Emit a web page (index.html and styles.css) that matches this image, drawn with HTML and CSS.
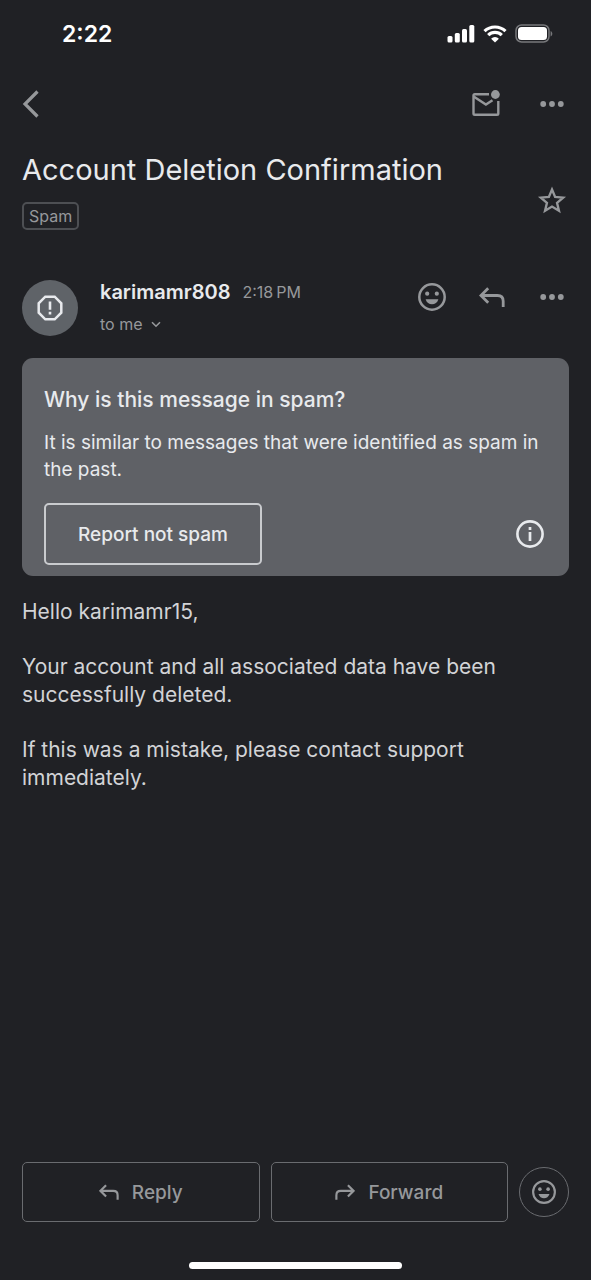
FILE: index.html
```html
<!DOCTYPE html>
<html lang="en">
<head>
<meta charset="utf-8">
<meta name="viewport" content="width=device-width, initial-scale=1">
<title>Account Deletion Confirmation</title>
<link rel="stylesheet" href="styles.css">
</head>
<body>
<svg class="symbols" aria-hidden="true">
  <symbol id="smile" viewBox="0 0 28 28">
    <circle cx="14" cy="14" r="12.7" fill="none" stroke="currentColor" stroke-width="2.5"/>
    <circle cx="9.2" cy="10.7" r="2.1" fill="currentColor"/>
    <circle cx="18.8" cy="10.7" r="2.1" fill="currentColor"/>
    <path d="M7.6 16.2h12.8c-.9 3.2-3.5 5-6.4 5s-5.500-1.800-6.400-5z" fill="currentColor"/>
  </symbol>
  <symbol id="reply" viewBox="0 0 26 20">
    <path d="M9.2 1.2 1.9 8.5l7.3 7.3M2 8.5h16.500q5.700 0 5.700 5.700V20" fill="none" stroke="currentColor" stroke-width="2.800"/>
  </symbol>
  <symbol id="dots" viewBox="0 0 24 6">
    <circle cx="3.200" cy="3" r="2.900" fill="currentColor"/>
    <circle cx="12" cy="3" r="2.900" fill="currentColor"/>
    <circle cx="20.800" cy="3" r="2.900" fill="currentColor"/>
  </symbol>
</svg>
<div class="screen">
  <div class="status">
    <span class="clock">2:22</span>
    <div class="signals">
      <svg width="28" height="18" viewBox="0 0 28 18" fill="#fff" aria-hidden="true">
        <rect x="0.500" y="11" width="5" height="6.500" rx="1.500"/>
        <rect x="7.800" y="8" width="5" height="9.500" rx="1.500"/>
        <rect x="15" y="4" width="5" height="13.500" rx="1.500"/>
        <rect x="22.300" y="0" width="5" height="17.500" rx="1.500"/>
      </svg>
      <svg width="24" height="18" viewBox="0 0 24 18" aria-hidden="true">
        <path d="M1.500 6.200a15.200 15.200 0 0 1 21 0M5.200 10.200a9.800 9.800 0 0 1 13.600 0" fill="none" stroke="#fff" stroke-width="3.200"/>
        <path d="M12 17.600 8.100 13.700a5.600 5.600 0 0 1 7.800 0z" fill="#fff"/>
      </svg>
      <svg width="38" height="20" viewBox="0 0 38 20" aria-hidden="true">
        <rect x="1" y="1" width="33" height="17" rx="5.500" fill="none" stroke="#77787b" stroke-width="1.500"/>
        <rect x="3" y="3" width="29" height="13" rx="3.500" fill="#fff"/>
        <path d="M35.600 7v5.500c2.300-1 2.300-4.500 0-5.500z" fill="#77787b"/>
      </svg>
    </div>
  </div>

  <header class="toolbar">
    <button class="icon-button back" aria-label="Back">
      <svg width="18" height="28" viewBox="0 0 18 28" aria-hidden="true"><path d="M15.500 1.500 3 14l12.500 12.500" fill="none" stroke="currentColor" stroke-width="3.200"/></svg>
    </button>
    <div class="toolbar-actions">
      <button class="icon-button" aria-label="Mark as unread">
        <svg width="30" height="28" viewBox="0 0 30 28" aria-hidden="true">
          <path d="M18 4.200H3.800q-1.300 0-1.300 1.300V23.500q0 1.300 1.300 1.300H26q1.300 0 1.300-1.300V11" fill="none" stroke="currentColor" stroke-width="2.400"/>
          <path d="M3 6.800 14.900 14.600 21.500 10.200" fill="none" stroke="currentColor" stroke-width="2.400"/>
          <circle cx="24.400" cy="4.500" r="4.400" fill="currentColor"/>
        </svg>
      </button>
      <button class="icon-button" aria-label="More options"><svg width="24" height="6" aria-hidden="true"><use href="#dots"/></svg></button>
    </div>
  </header>

  <main class="content">
    <section class="subject">
      <div>
        <h1 class="subject-title">Account Deletion Confirmation</h1>
        <span class="chip">Spam</span>
      </div>
      <button class="icon-button star" aria-label="Star">
        <svg width="30" height="29" viewBox="0 0 28 27" aria-hidden="true"><path d="m14 3.200 2.900 7 7.500.6-5.700 4.900 1.800 7.400L14 19.200l-6.500 3.900 1.800-7.400-5.700-4.900 7.500-.6z" fill="none" stroke="currentColor" stroke-width="2.200"/></svg>
      </button>
    </section>

    <section class="sender">
      <div class="avatar">
        <svg width="26" height="26" viewBox="0 0 26 26" aria-hidden="true">
          <path d="M8.300 1.700h9.400l6.600 6.600v9.400l-6.600 6.600H8.300l-6.600-6.600V8.300z" fill="none" stroke="currentColor" stroke-width="2.500"/>
          <path d="M13 6.500v8.200M13 16.800v2.700" stroke="currentColor" stroke-width="2.600"/>
        </svg>
      </div>
      <div class="sender-info">
        <div class="sender-line"><strong class="sender-name">karimamr808</strong><time class="sender-time">2:18&#8201;PM</time></div>
        <button class="recipient">to me
          <svg width="10" height="7" viewBox="0 0 10 7" aria-hidden="true"><path d="m1 1.200 4 4 4-4" fill="none" stroke="currentColor" stroke-width="1.600"/></svg>
        </button>
      </div>
      <div class="sender-actions">
        <button class="icon-button" aria-label="Add reaction"><svg width="28" height="28" aria-hidden="true"><use href="#smile"/></svg></button>
        <button class="icon-button" aria-label="Reply"><svg width="26" height="20" aria-hidden="true"><use href="#reply"/></svg></button>
        <button class="icon-button" aria-label="More message options"><svg width="24" height="6" aria-hidden="true"><use href="#dots"/></svg></button>
      </div>
    </section>

    <section class="notice">
      <h2 class="notice-title">Why is this message in spam?</h2>
      <p class="notice-text">It is similar to messages that were identified as spam in the past.</p>
      <div class="notice-actions">
        <button class="report">Report not spam</button>
        <button class="icon-button info" aria-label="More information">
          <svg width="28" height="28" viewBox="0 0 28 28" aria-hidden="true">
            <circle cx="14" cy="14" r="12.600" fill="none" stroke="currentColor" stroke-width="2.600"/>
            <path d="M14 12v9M14 7v3" stroke="currentColor" stroke-width="2.700"/>
          </svg>
        </button>
      </div>
    </section>

    <article class="message">
      <p>Hello karimamr15,</p>
      <p>Your account and all associated data have been successfully deleted.</p>
      <p>If this was a mistake, please contact support immediately.</p>
    </article>
  </main>

  <footer class="footer">
    <button class="footer-button"><svg width="20" height="16" aria-hidden="true"><use href="#reply"/></svg>Reply</button>
    <button class="footer-button"><svg class="mirrored" width="20" height="16" aria-hidden="true"><use href="#reply"/></svg>Forward</button>
    <button class="reaction" aria-label="React with emoji"><svg width="24" height="24" aria-hidden="true"><use href="#smile"/></svg></button>
  </footer>
  <div class="home-bar"></div>
</div>
</body>
</html>
```

FILE: styles.css
```css
* {
  box-sizing: border-box;
}

body,
h1,
h2,
p {
  margin: 0;
}

body {
  background: #202125;
  color: #e8eaed;
  font-family: Inter, "Liberation Sans", sans-serif;
}

button {
  padding: 0;
  border: 0;
  background: none;
  color: inherit;
  font: inherit;
  cursor: pointer;
}

svg {
  display: block;
  flex: none;
}

.symbols {
  position: absolute;
  width: 0;
  height: 0;
}

.screen {
  display: flex;
  flex-direction: column;
  min-height: 100vh;
}

.status {
  display: flex;
  align-items: center;
  justify-content: space-between;
  height: 68px;
  padding: 0 38px 0 62px;
  color: #fff;
}

.clock {
  font-size: 23px;
  font-weight: 600;
}

.signals {
  display: flex;
  align-items: center;
  gap: 8px;
}

.toolbar {
  display: flex;
  align-items: center;
  justify-content: space-between;
  height: 72px;
  padding: 0 22px;
}

.toolbar-actions {
  display: flex;
  gap: 32px;
}

.icon-button {
  display: flex;
  align-items: center;
  justify-content: center;
  flex: none;
  width: 34px;
  height: 34px;
  color: #96989b;
}

.back {
  justify-content: flex-start;
}

.content {
  flex: 1;
  padding: 10px 22px 22px;
}

.subject {
  display: flex;
  align-items: flex-start;
  justify-content: space-between;
  margin-bottom: 50px;
}

.subject-title {
  margin-bottom: 12px;
  font-size: 29px;
  font-weight: 400;
  line-height: 40px;
}

.chip {
  display: block;
  width: fit-content;
  padding: 0 5px;
  border: 2px solid #4d4f53;
  border-radius: 5px;
  color: #96989b;
  font-size: 16px;
  line-height: 24px;
}

.star {
  margin-top: 33px;
}

.sender {
  display: flex;
  margin-bottom: 22px;
}

.avatar {
  display: flex;
  align-items: center;
  justify-content: center;
  width: 56px;
  height: 56px;
  margin-right: 22px;
  border-radius: 50%;
  background: #5f6368;
}

.sender-info {
  display: flex;
  flex: 1;
  flex-direction: column;
  align-items: flex-start;
  gap: 8px;
  color: #96989b;
  line-height: 24px;
}

.sender-line {
  display: flex;
  gap: 12px;
}

.sender-name {
  color: #e8eaed;
  font-size: 20px;
  font-weight: 600;
}

.sender-time {
  font-size: 16px;
}

.recipient {
  display: flex;
  align-items: center;
  gap: 8px;
  font-size: 16px;
  line-height: 24px;
}

.sender-actions {
  display: flex;
  gap: 26px;
}

.notice {
  margin-bottom: 22px;
  padding: 28px 22px 11px;
  border-radius: 11px;
  background: #5f6166;
}

.notice-title {
  margin-bottom: 15px;
  font-size: 21px;
  font-weight: 500;
  line-height: 28px;
}

.notice-text {
  margin-bottom: 20px;
  font-size: 19px;
  line-height: 27px;
}

.notice-actions {
  display: flex;
  align-items: center;
  justify-content: space-between;
}

.report {
  height: 62px;
  padding: 0 32px;
  border: 2px solid #c9cbce;
  border-radius: 5px;
  font-size: 19px;
  font-weight: 500;
}

.info {
  color: #e8eaed;
}

.message {
  display: flex;
  flex-direction: column;
  gap: 27px;
  color: #d2d3d6;
  font-size: 21px;
  line-height: 28px;
}

.footer {
  display: flex;
  align-items: center;
  gap: 11px;
  padding: 0 22px;
}

.footer-button {
  display: flex;
  align-items: center;
  justify-content: center;
  flex: 1;
  gap: 13px;
  height: 60px;
  border: 1px solid #6a6c70;
  border-radius: 5px;
  color: #96989b;
  font-size: 19px;
  font-weight: 500;
}

.mirrored {
  transform: scaleX(-1);
}

.reaction {
  display: flex;
  align-items: center;
  justify-content: center;
  width: 50px;
  height: 50px;
  border: 1px solid #6a6c70;
  border-radius: 50%;
  color: #96989b;
}

.home-bar {
  width: 36%;
  height: 7px;
  margin: 40px auto 11px;
  border-radius: 4px;
  background: #fff;
}
```
